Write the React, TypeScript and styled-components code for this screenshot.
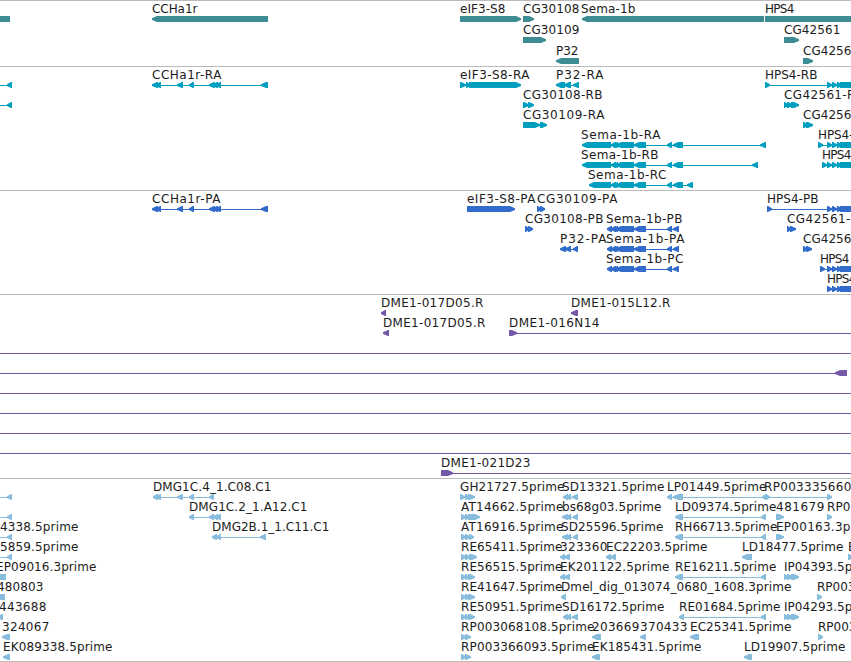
import React from 'react';
import styled, { createGlobalStyle } from 'styled-components';

const GlobalStyle = createGlobalStyle`
  body {
    margin: 0;
    background: #fff;
    overflow: hidden;
  }
`;

const Browser = styled.main`
  display: flex;
  flex-direction: column;
  width: 851px;
  height: 662px;
  overflow: hidden;
  background: #fff;
`;

const TrackPanel = styled.section<{ $height: number }>`
  flex: none;
  box-sizing: border-box;
  height: ${(p) => p.$height}px;
  border-top: 1px solid #bbb;
`;

const BottomRule = styled.div`
  flex: none;
  height: 1px;
  background: #bbb;
`;

const Canvas = styled.svg<{ $color: string }>`
  display: block;
  overflow: hidden;
  color: ${(p) => p.$color};
`;

const Label = styled.text`
  font-family: 'DejaVu Sans', sans-serif;
  font-size: 12px;
  fill: #1c1c1c;
  white-space: pre;
`;

type Span = [number, number];

type Feature = {
  dir: 'L' | 'R';
  exons: Span[];
  line?: Span;
  // text, left edge, right edge
  label?: [string, number, number];
};

type TrackData = {
  name: string;
  color: string;
  height: number;
  pitch: number;
  rows: Feature[][];
};

const left = (exons: Span[], line?: Span, label?: Feature['label']): Feature => ({
  dir: 'L',
  exons,
  line,
  label,
});

const right = (exons: Span[], line?: Span, label?: Feature['label']): Feature => ({
  dir: 'R',
  exons,
  line,
  label,
});

const edge = () => left([[7, 12]], [-5, 12]);

const cchExons: Span[] = [
  [152, 158],
  [156, 161],
  [177, 183],
  [189, 194],
  [209, 215],
  [213, 218],
  [216, 221],
  [261, 268],
];

const hpsExons: Span[] = [
  [827, 832],
  [832, 837],
  [837, 842],
  [840, 870],
];

const semaMiddle: Span[] = [
  [611, 616],
  [614, 618],
  [616, 634],
  [634, 646],
  [667, 672],
];

const semaProtein: Span[] = [[607, 612], ...semaMiddle, [673, 679]];

const threeExons: Span[] = [
  [461, 466],
  [465, 470],
  [468, 475],
];

const sdExons: Span[] = [
  [563, 568],
  [566, 571],
  [572, 578],
];

const ipExons: Span[] = [
  [784, 788],
  [787, 793],
  [791, 799],
];

const tracks: TrackData[] = [
  {
    name: 'genes',
    color: '#3d8c93',
    height: 66,
    pitch: 21,
    rows: [
      [
        left([[-10, 10]]),
        left([[152, 268]], undefined, ['CCHa1r', 152, 197]),
        right([[460, 521]], undefined, ['eIF3-S8', 460, 505]),
        right([[523, 534]], undefined, ['CG30108', 523, 579]),
        left([[582, 764]], undefined, ['Sema-1b', 581, 635]),
        right([[765, 870]], undefined, ['HPS4', 765, 794]),
      ],
      [
        right([[523, 546]], undefined, ['CG30109', 523, 579]),
        right([[784, 799]], undefined, ['CG42561', 784, 840]),
      ],
      [
        left([[556, 579]], undefined, ['P32', 556, 578]),
        right([[803, 813]], undefined, ['CG4256', 803, 851]),
      ],
    ],
  },
  {
    name: 'transcripts',
    color: '#009fbf',
    height: 124,
    pitch: 20,
    rows: [
      [
        edge(),
        left(cchExons, [152, 268], ['CCHa1r-RA', 152, 221]),
        right([[460, 466], [466, 470], [469, 521]], [460, 521], ['eIF3-S8-RA', 460, 529]),
        left([[556, 565], [564, 571], [573, 579]], [556, 579], ['P32-RA', 556, 603]),
        right([[765, 770], ...hpsExons], [765, 860], ['HPS4-RB', 765, 817]),
      ],
      [
        edge(),
        right([[523, 529], [528, 534]], [523, 534], ['CG30108-RB', 523, 602]),
        right(ipExons, [784, 799], ['CG42561-R', 784, 855]),
      ],
      [
        right([[523, 540], [540, 547]], [523, 547], ['CG30109-RA', 523, 604]),
        right([[803, 808], [806, 813]], [803, 813], ['CG4256', 803, 851]),
      ],
      [
        left([[582, 611], ...semaMiddle, [673, 683], [760, 766]], [582, 766], ['Sema-1b-RA', 581, 660]),
        right([[818, 823], ...hpsExons], [818, 860], ['HPS4-', 818, 853]),
      ],
      [
        left([[582, 611], ...semaMiddle, [673, 683], [752, 758]], [582, 758], ['Sema-1b-RB', 581, 658]),
        right([[822, 827], ...hpsExons], [822, 860], ['HPS4', 822, 851]),
      ],
      [left([[589, 611], ...semaMiddle, [673, 683], [687, 693]], [589, 693], ['Sema-1b-RC', 588, 666])],
    ],
  },
  {
    name: 'proteins',
    color: '#316bcb',
    height: 104,
    pitch: 20,
    rows: [
      [
        left(cchExons, [152, 268], ['CCHa1r-PA', 152, 220]),
        right([[467, 515]], undefined, ['eIF3-S8-PA', 467, 535]),
        right([[537, 541], [540, 545]], [537, 545], ['CG30109-PA', 537, 617]),
        right([[767, 772], ...hpsExons], [767, 860], ['HPS4-PB', 767, 818]),
      ],
      [
        right([[525, 529], [528, 533]], [525, 533], ['CG30108-PB', 525, 603]),
        left(semaProtein, [607, 679], ['Sema-1b-PB', 606, 682]),
        right([[787, 791], [790, 796]], [787, 796], ['CG42561-', 787, 850]),
      ],
      [
        left([[560, 566], [565, 571], [573, 578]], [560, 578], ['P32-PA', 560, 606]),
        left(semaProtein, [607, 679], ['Sema-1b-PA', 606, 684]),
        right([[803, 807], [806, 812]], [803, 812], ['CG4256', 803, 851]),
      ],
      [
        left(semaProtein, [607, 679], ['Sema-1b-PC', 606, 683]),
        right([[820, 825], ...hpsExons], [820, 860], ['HPS4', 820, 849]),
      ],
      [right(hpsExons, [827, 860], ['HPS4', 827, 856])],
    ],
  },
  {
    name: 'clones',
    color: '#7559a8',
    height: 184,
    pitch: 20,
    rows: [
      [
        left([[381, 386]], undefined, ['DME1-017D05.R', 381, 483]),
        left([[571, 578]], undefined, ['DME1-015L12.R', 571, 670]),
      ],
      [
        left([[383, 389]], undefined, ['DME1-017D05.R', 383, 485]),
        right([[509, 517]], [509, 860], ['DME1-016N14', 509, 599]),
      ],
      [left([], [-5, 860])],
      [left([[835, 847]], [-5, 847])],
      [left([], [-5, 860])],
      [left([], [-5, 860])],
      [left([], [-5, 860])],
      [left([], [-5, 860])],
      [right([[441, 453]], [441, 860], ['DME1-021D23', 441, 530])],
    ],
  },
  {
    name: 'ests',
    color: '#87bcdd',
    height: 183,
    pitch: 20,
    rows: [
      [
        edge(),
        left([[153, 158], [156, 161], [177, 183], [189, 194], [209, 214]], [153, 214], ['DMG1C.4_1.C08.C1', 153, 271]),
        right([[460, 465], [465, 470], [468, 475]], [460, 475], ['GH21727.5prime', 460, 564]),
        left(sdExons, [563, 578], ['SD13321.5prime', 562, 664]),
        left([[667, 672], [673, 683], [762, 767]], [667, 766], ['LP01449.5prime', 667, 766]),
        right([[765, 770], [827, 832]], [765, 832], ['RP003335660', 764, 851]),
      ],
      [
        edge(),
        left([[189, 194], [209, 214], [213, 218], [216, 221]], [189, 221], ['DMG1C.2_1.A12.C1', 189, 307]),
        right([[461, 466], [465, 470], [468, 480]], [461, 480], ['AT14662.5prime', 461, 563]),
        left([[562, 568], [566, 571], [573, 578]], [562, 578], ['bs68g03.5prime', 562, 661]),
        left([[675, 683], [761, 766]], [675, 766], ['LD09374.5prime', 675, 776]),
        right([[776, 784]], undefined, ['481679', 776, 824]),
        right([[827, 832]], undefined, ['RP0', 827, 850]),
      ],
      [
        { ...edge(), label: ['4338.5prime', 0, 78] },
        left([[212, 217], [216, 221], [260, 266]], [212, 266], ['DMG2B.1_1.C11.C1', 212, 329]),
        right([[461, 466], [465, 470], [469, 474]], [461, 474], ['AT16916.5prime', 461, 563]),
        left([[562, 568], [566, 571], [573, 578]], [562, 578], ['SD25596.5prime', 561, 663]),
        left([[675, 683], [761, 766]], [675, 766], ['RH66713.5prime', 675, 777]),
        right([[776, 784]], undefined, ['EP00163.3p', 776, 850]),
      ],
      [
        { ...edge(), label: ['5859.5prime', 0, 78] },
        right([[461, 466], [465, 470], [469, 477]], [461, 477], ['RE65411.5prime', 461, 562]),
        left([[560, 565], [564, 570]], [560, 570], ['323360', 560, 607]),
        left([[606, 611], [610, 616]], [606, 616], ['EC22203.5prime', 606, 707]),
        left([[742, 752]], undefined, ['LD18477.5prime', 742, 843]),
        right([[848, 854]], undefined, ['E', 848, 854]),
      ],
      [
        left([[-6, 6]], undefined, ['EP09016.3prime', -4, 96]),
        right(threeExons, [461, 475], ['RE56515.5prime', 461, 562]),
        left([[560, 565], [564, 570]], [560, 570], ['EK201122.5prime', 560, 669]),
        left([[675, 683], [761, 766]], [675, 766], ['RE16211.5prime', 675, 776]),
        right(ipExons, [784, 799], ['IP04393.5p', 784, 852]),
      ],
      [
        left([[-6, 5]], undefined, ['480803', -3, 43]),
        right(threeExons, [461, 475], ['RE41647.5prime', 461, 562]),
        left([[561, 566]], undefined, ['Dmel_dig_013074_0680_1608.3prime', 561, 791]),
        right([[817, 822]], undefined, ['RP003', 817, 855]),
      ],
      [
        left([[-3, 3]], undefined, ['443688', -1, 46]),
        right(threeExons, [461, 475], ['RE50951.5prime', 461, 562]),
        left(sdExons, [563, 578], ['SD16172.5prime', 562, 664]),
        left([[679, 684], [761, 766]], [679, 766], ['RE01684.5prime', 679, 780]),
        right(ipExons, [784, 799], ['IP04293.5p', 784, 852]),
      ],
      [
        left([[2, 10]], undefined, ['324067', 2, 49]),
        right([[461, 466], [465, 471]], [461, 471], ['RP003068108.5prime', 461, 594]),
        left([[592, 601]], undefined, ['203669', 592, 639]),
        left([[640, 646]], undefined, ['370433', 640, 687]),
        left([[690, 699]], undefined, ['EC25341.5prime', 690, 791]),
        right([[818, 823]], undefined, ['RP003', 818, 856]),
      ],
      [
        left([[3, 10]], undefined, ['EK089338.5prime', 3, 112]),
        right([[461, 466], [465, 471]], [461, 471], ['RP003366093.5prime', 461, 594]),
        left([[592, 600]], undefined, ['EK185431.5prime', 592, 701]),
        left([[744, 752]], undefined, ['LD19907.5prime', 744, 845]),
      ],
    ],
  },
];

function exonPath([a, b]: Span, dir: Feature['dir'], y: number) {
  const head = Math.min(b - a, 6);
  if (dir === 'L') {
    return `M${b} ${y}H${a + head - 1}L${a} ${y + 2.3}V${y + 4}L${a + head - 1} ${y + 6}H${b}Z`;
  }
  return `M${a} ${y}H${b - head + 1}L${b} ${y + 2.3}V${y + 4}L${b - head + 1} ${y + 6}H${a}Z`;
}

function FeatureGlyph({ feature, top }: { feature: Feature; top: number }) {
  const { dir, exons, line, label } = feature;
  return (
    <g>
      {line && <rect x={line[0]} y={top + 18} width={line[1] - line[0]} height={1} fill="currentColor" />}
      {exons.map((exon, i) => (
        <path key={i} d={exonPath(exon, dir, top + 15)} fill="currentColor" />
      ))}
      {label && (
        <Label x={label[1]} y={top + 12} textLength={label[2] - label[1] + 0.4}>
          {label[0]}
        </Label>
      )}
    </g>
  );
}

function Track({ track }: { track: TrackData }) {
  return (
    <TrackPanel $height={track.height} aria-label={track.name}>
      <Canvas $color={track.color} width={851} height={track.height - 1}>
        {track.rows.map((row, r) =>
          row.map((feature, i) => (
            <FeatureGlyph key={`${r}-${i}`} feature={feature} top={r * track.pitch} />
          ))
        )}
      </Canvas>
    </TrackPanel>
  );
}

export default function App() {
  return (
    <>
      <GlobalStyle />
      <Browser>
        {tracks.map((track) => (
          <Track key={track.name} track={track} />
        ))}
        <BottomRule />
      </Browser>
    </>
  );
}
